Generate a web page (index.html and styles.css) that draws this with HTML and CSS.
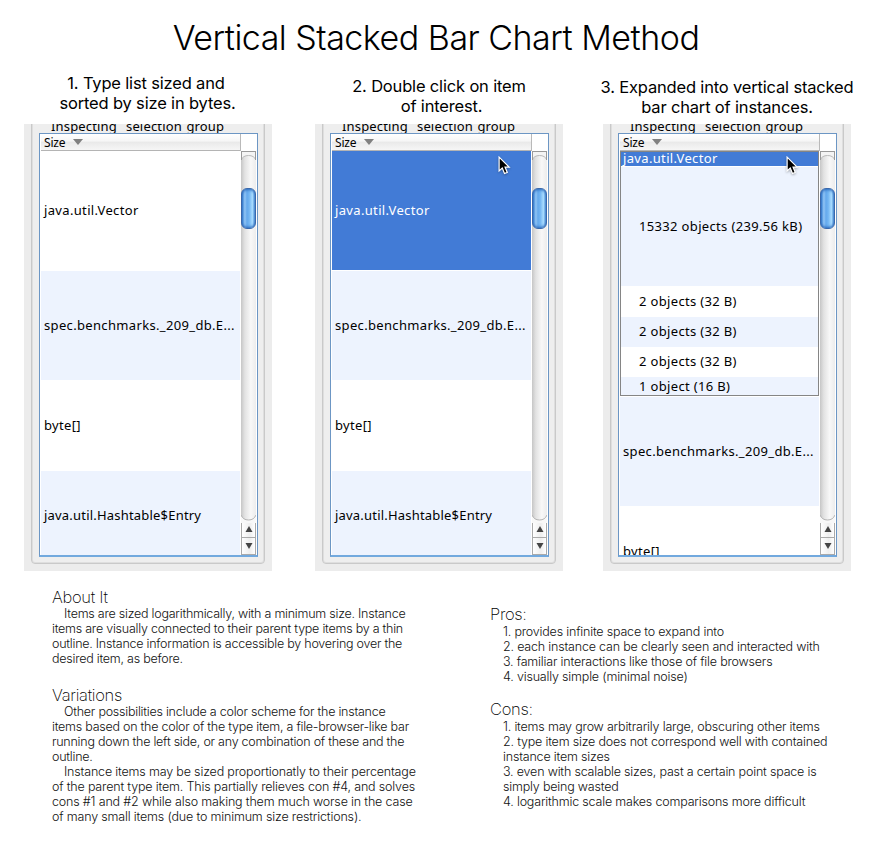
FILE: index.html
```html
<!DOCTYPE html>
<html lang="en">
<head>
<meta charset="utf-8">
<title>Vertical Stacked Bar Chart Method</title>
<link rel="stylesheet" href="styles.css">
</head>
<body>
<svg width="0" height="0" class="defs">
  <defs>
    <symbol id="cursor" viewBox="0 0 14 21">
      <path d="M1.2 1 V15.8 L4.6 12.7 L7 18.6 L10 17.4 L7.6 11.6 H12 Z" fill="#000" stroke="#fff" stroke-width="1.3"/>
    </symbol>
    <symbol id="up" viewBox="0 0 8 6"><path d="M4 0 L7.5 6 H.5 Z" fill="#444"/></symbol>
    <symbol id="down" viewBox="0 0 8 6"><path d="M4 6 L7.5 0 H.5 Z" fill="#444"/></symbol>
    <symbol id="sort" viewBox="0 0 10 6"><path d="M0 0 H10 L5 6 Z" fill="#808080"/></symbol>
    <symbol id="foot" viewBox="0 0 15 10"><path d="M0 2 Q2 7 7.5 7 Q13 7 15 2 V10 H0 Z" fill="#f8f8f8"/><path d="M0 2 Q2 7 7.5 7 Q13 7 15 2" fill="none" stroke="#b4b4b4"/></symbol>
    <symbol id="cap" viewBox="0 0 15 10"><path d="M0 0 H15 V9 Q13 4.500 7.500 4.500 Q2 4.500 0 9 Z" fill="#f4f4f4"/><path d="M0 9 Q2 4.500 7.500 4.500 Q13 4.500 15 9" fill="none" stroke="#bbb"/><path d="M0 .5 H15 M.5 0 V9 M14.500 0 V9" stroke="#999"/></symbol>
  </defs>
</svg>
<h1 class="title">Vertical Stacked Bar Chart Method</h1>

<main class="steps">
  <section class="step step-1">
    <h2 class="caption"><span>1. Type list sized and</span><span>sorted by size in bytes.</span></h2>
    <div class="window">
      <div class="group"></div>
      <div class="legend">Inspecting&nbsp; selection group</div>
      <div class="table">
        <div class="content">
          <div class="head">Size<svg class="sort"><use href="#sort"/></svg></div>
          <div class="rows">
            <div class="row h120">java.util.Vector</div>
            <div class="row alt h109">spec.benchmarks._209_db.E...</div>
            <div class="row h91">byte[]</div>
            <div class="row alt h91 tight">java.util.Hashtable$Entry</div>
          </div>
        </div>
        <div class="scroll"><div class="track"><svg class="cap"><use href="#cap"/></svg><div class="thumb"></div><svg class="foot"><use href="#foot"/></svg></div><div class="arrow"><svg><use href="#up"/></svg></div><div class="arrow last"><svg><use href="#down"/></svg></div></div>
      </div>
    </div>
  </section>

  <section class="step step-2">
    <h2 class="caption"><span>2. Double click on item</span><span>of interest.</span></h2>
    <div class="window">
      <div class="group"></div>
      <div class="legend">Inspecting&nbsp; selection group</div>
      <div class="table">
        <div class="content">
          <div class="head">Size<svg class="sort"><use href="#sort"/></svg></div>
          <div class="rows">
            <div class="row selected h120">java.util.Vector</div>
            <div class="row alt h109">spec.benchmarks._209_db.E...</div>
            <div class="row h91">byte[]</div>
            <div class="row alt h91 tight">java.util.Hashtable$Entry</div>
          </div>
        </div>
        <div class="scroll"><div class="track"><svg class="cap"><use href="#cap"/></svg><div class="thumb"></div><svg class="foot"><use href="#foot"/></svg></div><div class="arrow"><svg><use href="#up"/></svg></div><div class="arrow last"><svg><use href="#down"/></svg></div></div>
      </div>
      <svg class="cursor"><use href="#cursor"/></svg>
    </div>
  </section>

  <section class="step step-3">
    <h2 class="caption"><span>3. Expanded into vertical stacked</span><span>bar chart of instances.</span></h2>
    <div class="window">
      <div class="group"></div>
      <div class="legend">Inspecting&nbsp; selection group</div>
      <div class="table">
        <div class="content">
          <div class="head">Size<svg class="sort"><use href="#sort"/></svg></div>
          <div class="rows">
            <div class="expanded">
              <div class="row selected h15">java.util.Vector</div>
              <div class="row alt h119">15332 objects (239.56 kB)</div>
              <div class="row h31">2 objects (32 B)</div>
              <div class="row alt h30">2 objects (32 B)</div>
              <div class="row h30">2 objects (32 B)</div>
              <div class="row alt h18">1 object (16 B)</div>
            </div>
            <div class="row alt h109">spec.benchmarks._209_db.E...</div>
            <div class="row h91">byte[]</div>
          </div>
        </div>
        <div class="scroll"><div class="track"><svg class="cap"><use href="#cap"/></svg><div class="thumb"></div><svg class="foot"><use href="#foot"/></svg></div><div class="arrow"><svg><use href="#up"/></svg></div><div class="arrow last"><svg><use href="#down"/></svg></div></div>
      </div>
      <svg class="cursor"><use href="#cursor"/></svg>
    </div>
  </section>
</main>

<footer class="notes">
  <div class="about">
    <h3>About It</h3>
    <p>Items are sized logarithmically, with a minimum size. Instance<br>items are visually connected to their parent type items by a thin<br>outline. Instance information is accessible by hovering over the<br>desired item, as before.</p>
    <h3>Variations</h3>
    <p>Other possibilities include a color scheme for the instance<br>items based on the color of the type item, a file-browser-like bar<br>running down the left side, or any combination of these and the<br>outline.</p>
    <p class="loose">Instance items may be sized proportionatly to their percentage<br>of the parent type item. This partially relieves con #4, and solves<br>cons #1 and #2 while also making them much worse in the case<br>of many small items (due to minimum size restrictions).</p>
  </div>
  <div class="verdict">
    <h3>Pros:</h3>
    <div class="list">1. provides infinite space to expand into<br>2. each instance can be clearly seen and interacted with<br>3. familiar interactions like those of file browsers<br>4. visually simple (minimal noise)</div>
    <h3>Cons:</h3>
    <div class="list">1. items may grow arbitrarily large, obscuring other items<br>2. type item size does not correspond well with contained<br>instance item sizes<br>3. even with scalable sizes, past a certain point space is<br>simply being wasted<br>4. logarithmic scale makes comparisons more difficult</div>
  </div>
</footer>
</body>
</html>
```
FILE: styles.css
```css
* { box-sizing: border-box; }
html, body { margin: 0; background: #fff; }
body { width: 878px; height: 847px; overflow: hidden; font-family: Inter, "Liberation Sans", sans-serif; color: #000; }
.defs { display: block; }
h1, h2, h3, p { margin: 0; font-weight: 300; }

.title { height: 73px; padding: 16px 6px 0 0; text-align: center; font-size: 34px; line-height: 44px; letter-spacing: -.5px; }

.steps { display: flex; padding-left: 24px; height: 498px; }
.step { width: 248px; flex: none; }
.step-2 { margin-left: 43px; }
.step-3 { margin-left: 40px; }
.caption { height: 51px; display: flex; flex-direction: column; align-items: center; font-size: 16.5px; line-height: 20px; letter-spacing: -.17px; font-weight: 370; white-space: nowrap; }
.step-1 .caption { padding-right: 1px; }
.step-1 .caption span:first-child { padding-right: 3px; }
.step-2 .caption { padding-top: 3px; }
.step-2 .caption span:last-child { padding-left: 5px; }
.step-3 .caption { padding-top: 4px; }

.window { position: relative; height: 447px; overflow: hidden; background: #ececec; padding: 9px 0 0 15px; font-family: "Noto Sans", "DejaVu Sans", sans-serif; font-size: 13px; letter-spacing: .34px; white-space: nowrap; }
.group { position: absolute; left: 7px; top: -10px; width: 234px; height: 450px; border: 1px solid #c9c9c9; border-radius: 4px; background: #eee; box-shadow: inset 0 0 0 1px #dedede; }
.legend { position: absolute; left: 27px; top: -7px; line-height: 18px; letter-spacing: .16px; word-spacing: 1px; }
.table { position: relative; width: 219px; height: 424px; border: 1px solid #6c96c4; border-bottom: 2px solid #72a9de; background: #fff; display: flex; }
.content { width: 201px; display: flex; flex-direction: column; }
.head { height: 17px; margin-left: 1px; flex: none; padding-left: 3px; display: flex; align-items: center; font-size: 12px; letter-spacing: -.2px; background: linear-gradient(#fff, #f6f6f6 45%, #e9e9e9 50%, #f6f6f6); border-bottom: 1px solid #b4b4b4; border-right: 1px solid #b9b9b9; }
.sort { width: 10px; height: 6px; margin: 0 0 0 8px; }
.rows { flex: 1; min-height: 0; overflow: hidden; padding: 0 1px; }
.row { display: flex; align-items: center; padding: 0 0 2px 3px; flex: none; background: #fff; }
.row.alt { background: #edf3fe; }
.row.selected { background: #427bd6; color: #fff; border-bottom: 1px solid #fff; }
.row.tight { letter-spacing: .2px; padding-bottom: 3px; }
.h120 { height: 120px; } .h119 { height: 119px; } .h109 { height: 109px; } .h91 { height: 91px; }
.h31 { height: 31px; } .h30 { height: 30px; } .h18 { height: 18px; } .h15 { height: 15px; }
.expanded { border: 1px solid #858585; margin-bottom: 1px; }
.expanded .row { padding-left: 18px; }
.expanded .row.h18 { padding-bottom: 0; }
.expanded .row.selected { padding-left: 2px; line-height: 14px; }

.scroll { width: 15px; margin-top: 17px; display: flex; flex-direction: column; }
.track { flex: 1; background: linear-gradient(90deg, #c6c6c6, #e2e2e2 25%, #f8f8f8 65%, #ececec); display: flex; flex-direction: column; }
.cap { width: 15px; height: 10px; }
.thumb { height: 41px; margin-top: 27px; border: 1px solid #3a69ac; border-radius: 6px; background: linear-gradient(90deg, #397fd0, #91c5f5 22%, #65a9ec 38%, #72b5f2 55%, #a8dcff 80%, #5794d6); box-shadow: inset 0 2px 3px -1px #2a68bc, inset 0 -2px 3px -1px #2a68bc; }
.foot { width: 15px; height: 10px; margin-top: auto; position: relative; top: 2px; }
.arrow { height: 17px; border: 1px solid #aaa; border-top: 0; background: linear-gradient(90deg, #fff, #eee 60%, #fff); display: flex; align-items: center; justify-content: center; }
.arrow svg { width: 8px; height: 6px; }
.cursor { position: absolute; left: 183px; top: 32px; width: 13px; height: 20px; filter: drop-shadow(0 1px 1px rgba(0,0,0,.3)); }

.notes { display: flex; font-size: 12.5px; line-height: 15px; white-space: nowrap; font-weight: 300; color: #111; }
.notes h3 { font-size: 16.500px; line-height: 20px; letter-spacing: -.3px; font-weight: 200; color: #000; }
.about { width: 438px; padding: 16px 0 0 52px; }
.about p { text-indent: 12px; margin-top: -1px; letter-spacing: -.24px; }
.about h3 + p + h3 { margin-top: 19px; }
.about .loose { margin-top: 0; letter-spacing: -.17px; }
.verdict { padding: 33px 0 0 52px; }
.list { padding-left: 13px; letter-spacing: -.19px; }
.list + h3 { margin-top: 15px; }
```
